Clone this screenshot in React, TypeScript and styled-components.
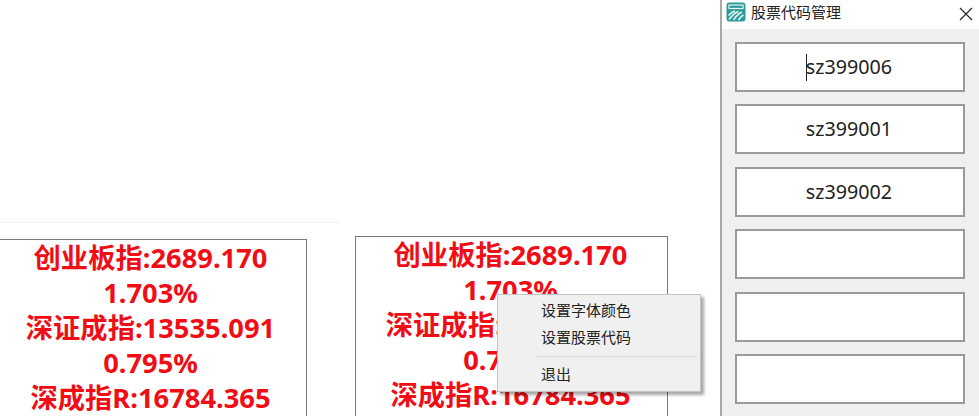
import React from 'react';
import styled, { createGlobalStyle } from 'styled-components';

const GlobalStyle = createGlobalStyle`
  html, body {
    margin: 0;
    padding: 0;
    background: #fff;
    overflow: hidden;
  }
`;

const Screen = styled.div`
  position: relative;
  width: 979px;
  height: 416px;
  display: flex;
  overflow: hidden;
  font-family: "Noto Sans", "Noto Sans CJK SC", sans-serif;
`;

const Desktop = styled.div`
  width: 720px;
  flex: none;
  padding-top: 222px;
  box-sizing: border-box;
`;

const Rule = styled.div`
  width: 339px;
  height: 1px;
  background: #ededed;
`;

const Widgets = styled.div`
  display: flex;
  margin-left: -4px;
  gap: 48px;
`;

const Widget = styled.div<{ $top: number; $width: number }>`
  width: ${(p) => p.$width}px;
  height: 240px;
  margin-top: ${(p) => p.$top}px;
  padding-right: 2px;
  box-sizing: border-box;
  border: 1px solid #7a7a7a;
  background: #fff;
  color: #f00d15;
  font-size: 27.3px;
  font-weight: 700;
  line-height: 35px;
  text-align: center;
  white-space: nowrap;
`;

const Menu = styled.div`
  position: absolute;
  left: 497px;
  top: 294px;
  width: 204px;
  height: 98px;
  box-sizing: border-box;
  padding-top: 2px;
  background: #f0f0f0;
  border: 1px solid #c4c4c4;
  box-shadow: 3px 3px 3px rgba(0, 0, 0, 0.35);
  font-size: 15px;
  color: #222;
`;

const MenuItem = styled.div`
  height: 27px;
  line-height: 27px;
  padding-left: 43px;
`;

const MenuLine = styled.div`
  height: 1px;
  margin: 5px 3px 4px 38px;
  background: #d8d8d8;
`;

const Dialog = styled.div`
  flex: 1;
  display: flex;
  flex-direction: column;
  background: #f0f0f0;
  border-left: 2px solid #a8a8a8;
`;

const TitleBar = styled.div`
  height: 29px;
  flex: none;
  display: flex;
  align-items: flex-start;
  gap: 5px;
  padding: 2px 6px 0 4px;
  box-sizing: border-box;
  background: #fff;
  font-size: 15px;
  line-height: 20px;
  color: #222;
`;

const TitleText = styled.span`
  flex: 1;
`;

const CloseSlot = styled.span`
  display: block;
  margin-top: 5px;
`;

const Fields = styled.div`
  display: flex;
  flex-direction: column;
  gap: 12.4px;
  padding: 13px 14px 0 13px;
`;

const Field = styled.div`
  position: relative;
  height: 50px;
  flex: none;
  box-sizing: border-box;
  border: 2px solid #9a9a9a;
  padding-right: 2px;
  background: #fff;
  font-size: 19.7px;
  line-height: 46px;
  text-align: center;
  color: #222;
`;

const Caret = styled.span`
  position: absolute;
  left: 69px;
  top: 10px;
  width: 1px;
  height: 27px;
  background: #222;
`;

const AppIcon = () => (
  <svg width="20" height="20" viewBox="0 0 20 20">
    <rect x="0.5" y="0.5" width="19" height="19" rx="3" fill="#2b9a98" />
    <rect x="3" y="3" width="14" height="3.5" fill="none" stroke="#e6f4f3" strokeWidth="1.2" />
    <path
      d="M2.5 13.5C5 11 7 9.5 9 9M3 17.5C6 13.5 9 10.5 12.5 9.5M7.5 18C10 14 12.5 11.5 16 10M12.5 18C14 15.5 15.5 14 17.5 13"
      stroke="#e6f4f3"
      strokeWidth="1.7"
      fill="none"
    />
  </svg>
);

const CloseIcon = () => (
  <svg width="14" height="14" viewBox="0 0 14 14" style={{ display: 'block' }}>
    <path d="M1 1l12 12M13 1L1 13" stroke="#222" strokeWidth="1.1" fill="none" />
  </svg>
);

const lines = [
  '创业板指:2689.170',
  '1.703%',
  '深证成指:13535.091',
  '0.795%',
  '深成指R:16784.365',
];

const codes = ['sz399006', 'sz399001', 'sz399002', '', '', ''];

function App() {
  return (
    <>
      <GlobalStyle />
      <Screen>
        <Desktop>
          <Rule />
          <Widgets>
            <Widget $top={16} $width={311}>
              {lines.map((l) => (
                <div key={l}>{l}</div>
              ))}
            </Widget>
            <Widget $top={13} $width={313}>
              {lines.map((l) => (
                <div key={l}>{l}</div>
              ))}
            </Widget>
          </Widgets>
        </Desktop>
        <Dialog>
          <TitleBar>
            <AppIcon />
            <TitleText>股票代码管理</TitleText>
            <CloseSlot>
              <CloseIcon />
            </CloseSlot>
          </TitleBar>
          <Fields>
            {codes.map((c, i) => (
              <Field key={i}>
                {c}
                {i === 0 && <Caret />}
              </Field>
            ))}
          </Fields>
        </Dialog>
        <Menu>
          <MenuItem>设置字体颜色</MenuItem>
          <MenuItem>设置股票代码</MenuItem>
          <MenuLine />
          <MenuItem>退出</MenuItem>
        </Menu>
      </Screen>
    </>
  );
}

export default App;
